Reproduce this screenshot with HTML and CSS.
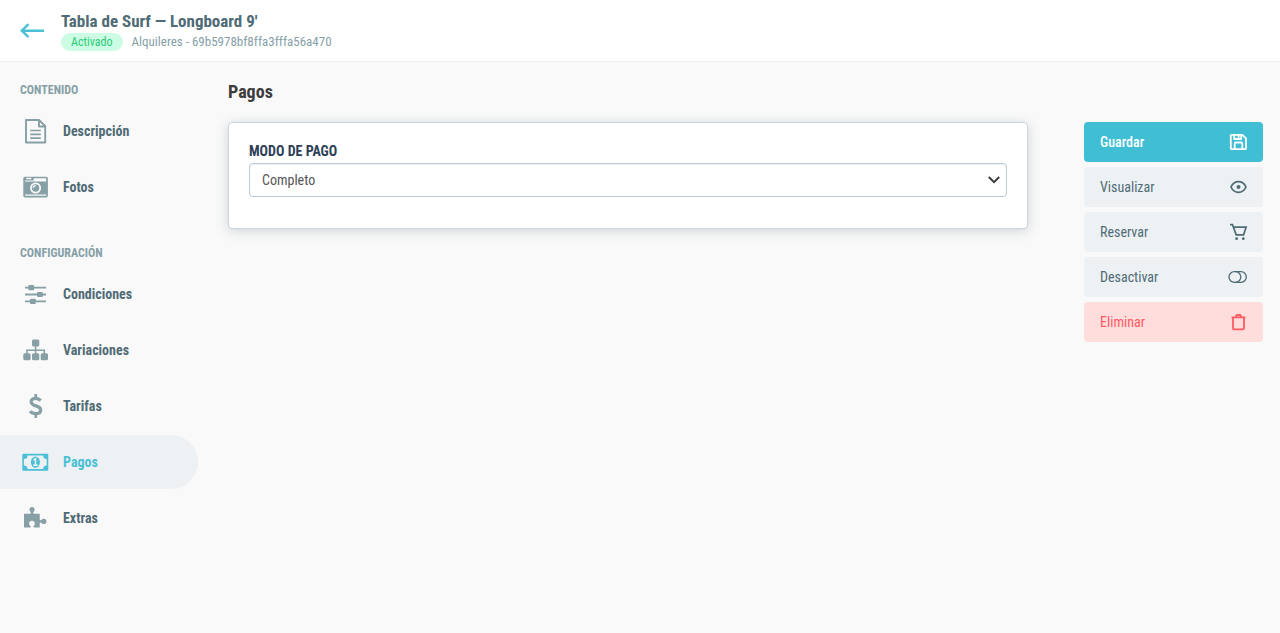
FILE: index.html
```html
<!DOCTYPE html>
<html lang="es">
<head>
  <meta charset="UTF-8">
  <meta name="viewport" content="width=device-width, initial-scale=1.0">
  <title>Tabla de Surf — Longboard 9' - Pagos</title>
  <link rel="stylesheet" href="styles.css">
</head>
<body>
  <!-- Header -->
  <header class="header">
    <a class="back" href="#" aria-label="Volver">
      <svg width="24" height="16" viewBox="0 0 24 16" fill="none" stroke="currentColor" stroke-width="2.4">
        <path d="M24 7.700H2M8.500 1.200L1.800 7.700l6.700 6.500"/>
      </svg>
    </a>
    <div class="header-info">
      <h1>Tabla de Surf — Longboard 9'</h1>
      <div class="header-meta">
        <span class="status">Activado</span>
        <span>Alquileres - 69b5978bf8ffa3fffa56a470</span>
      </div>
    </div>
  </header>

  <div class="layout">
    <!-- Sidebar -->
    <nav class="sidebar">
      <h2>Contenido</h2>
      <ul>
        <li><a href="#">
          <svg width="27" height="27" viewBox="0 0 27 27" fill="none" stroke="currentColor" stroke-width="1.900" stroke-linejoin="round">
            <path d="M4 2h13l6.200 6.200V24.500H4zM17 2.200v6.300h6"/>
            <path d="M8.200 12.500h10.600M8.200 16.300h10.600M8.200 20.100h10.600" stroke-width="1.700"/>
          </svg>
          Descripción
        </a></li>
        <li><a href="#">
          <svg width="27" height="27" viewBox="0 0 27 27">
            <rect x="1.300" y="2.700" width="24.600" height="20.800" rx="1.700" fill="currentColor"/>
            <path fill="#f9f9f9" d="M4.300 3.800h5v1.400h-5zM12 4.200h12.200v3.300H11zM3 6.500h8v1H3zM3 20.500h21.300v1.300H3z"/>
            <circle cx="13.600" cy="14" r="4.600" fill="currentColor" stroke="#f9f9f9" stroke-width="1.800"/>
            <path d="M11.300 14a2.300 2.300 0 0 1 2.300-2.300" fill="none" stroke="#f9f9f9" stroke-width="1.200"/>
          </svg>
          Fotos
        </a></li>
      </ul>

      <h2>Configuración</h2>
      <ul>
        <li><a href="#">
          <svg width="27" height="27" viewBox="0 0 27 27" fill="currentColor">
            <path d="M3 5.700h21v1.800H3zM3 12.600h21v1.800H3zM3 19.500h21v1.800H3z"/>
            <rect x="6.300" y="4" width="5.800" height="5.200" rx="1"/>
            <rect x="15" y="10.900" width="5.800" height="5.200" rx="1"/>
            <rect x="8" y="17.800" width="5.800" height="5.200" rx="1"/>
          </svg>
          Condiciones
        </a></li>
        <li><a href="#">
          <svg width="27" height="27" viewBox="0 0 27 27" fill="currentColor">
            <rect x="10" y="2.500" width="7.300" height="7" rx="1.500"/>
            <rect x="1.300" y="16.200" width="7.300" height="7" rx="1.500"/>
            <rect x="10" y="16.200" width="7.300" height="7" rx="1.500"/>
            <rect x="18.700" y="16.200" width="7.300" height="7" rx="1.500"/>
            <path d="M13.600 9v8M5 17v-3.700h17.300V17" fill="none" stroke="currentColor" stroke-width="1.600"/>
          </svg>
          Variaciones
        </a></li>
        <li><a href="#">
          <svg width="27" height="27" viewBox="0 0 27 27" fill="none" stroke="currentColor" stroke-width="3.300">
            <path d="M18.700 7.500C17.400 6 15.700 5.300 13.600 5.300c-2.800 0-4.500 1.400-4.500 3.500 0 5.300 9.600 3 9.600 8.200 0 2.400-2.100 3.700-4.900 3.700-2.300 0-4.300-.7-5.700-2.400"/>
            <path d="M13.800 1v4.300M13.800 21v4" stroke-width="2.600"/>
          </svg>
          Tarifas
        </a></li>
        <li><a class="active" href="#" aria-current="page">
          <svg width="27" height="27" viewBox="0 0 27 27">
            <path fill="currentColor" fill-rule="evenodd" d="M1.300 4.700h24a1 1 0 0 1 1 1v15a1 1 0 0 1-1 1h-24a1 1 0 0 1-1-1v-15a1 1 0 0 1 1-1zM5.500 6.500a3.600 3.600 0 0 1-3.600 3.600v6.300a3.600 3.600 0 0 1 3.600 3.600h15.700a3.600 3.600 0 0 1 3.500-3.600v-6.300a3.600 3.600 0 0 1-3.500-3.600z"/>
            <ellipse cx="13.400" cy="13.200" rx="4.500" ry="5.600" fill="currentColor"/>
            <path d="M11.500 11.200l2-1.500v6M11.200 16.300h4.600" fill="none" stroke="#edf1f4" stroke-width="1.500"/>
          </svg>
          Pagos
        </a></li>
        <li><a href="#">
          <svg width="27" height="27" viewBox="0 0 27 27" fill="currentColor">
            <path d="M2 8.700h6c1 0 1.300-.8.800-1.500-.7-1-1.300-1.600-1.300-2.700C7.500 2.800 8.600 2 10 2s2.600.8 2.600 2.500c0 1.100-.6 1.700-1.300 2.700-.5.700-.2 1.500.9 1.500h5.500v5.500c0 1.100.8 1.400 1.500.9 1-.7 1.600-1.300 2.700-1.300 1.700 0 2.500 1.200 2.500 2.600s-.8 2.600-2.500 2.600c-1.100 0-1.700-.6-2.700-1.300-.7-.5-1.500-.2-1.500.9v4h-5.200c-1 0-1.400-.7-.9-1.500.7-1 1.300-1.600 1.300-2.700 0-1.700-1.300-2.600-2.900-2.600s-2.900.9-2.900 2.600c0 1.100.6 1.700 1.300 2.700.5.800.1 1.500-.9 1.500H2z"/>
          </svg>
          Extras
        </a></li>
      </ul>
    </nav>

    <!-- Payment form -->
    <main class="content">
      <h2>Pagos</h2>
      <div class="columns">
        <form class="card">
          <label for="payment-mode">Modo de pago</label>
          <div class="select-box">
            <select id="payment-mode">
              <option selected>Completo</option>
            </select>
            <svg width="12" height="8" viewBox="0 0 12 8" fill="none" stroke="currentColor" stroke-width="2">
              <path d="M.8 1l5.200 5.200L11.200 1"/>
            </svg>
          </div>
        </form>

        <!-- Actions -->
        <div class="actions">
          <button type="button" class="primary">Guardar
            <svg width="20" height="20" viewBox="0 0 20 20" fill="none" stroke="currentColor" stroke-width="1.800" stroke-linejoin="round">
              <path d="M3.800 2.800h10.500l3.700 3.500v9.900a1 1 0 0 1-1 1H3.800a1 1 0 0 1-1-1V3.800a1 1 0 0 1 1-1zM6.200 3v4h7V3M6.700 17v-5.500a1 1 0 0 1 1-1h5.600a1 1 0 0 1 1 1V17M10.600 3v2.700"/>
            </svg>
          </button>
          <button type="button">Visualizar
            <svg width="20" height="20" viewBox="0 0 20 20" fill="none" stroke="currentColor" stroke-width="1.700">
              <path d="M3 10c1.500-3.400 4.300-5.300 7.500-5.300S16.500 6.600 18 10c-1.500 3.400-4.300 5.300-7.500 5.300S4.500 13.400 3 10z"/>
              <circle cx="10.500" cy="10" r="2" fill="currentColor" stroke="none"/>
            </svg>
          </button>
          <button type="button">Reservar
            <svg width="20" height="20" viewBox="0 0 20 20" fill="none" stroke="currentColor" stroke-width="1.700">
              <path d="M2 2.700h2.500l3.700 10.100h7.400l2.500-7.600H5.500"/>
              <circle cx="8.600" cy="16.700" r="1.400" fill="currentColor" stroke="none"/>
              <circle cx="15.300" cy="16.700" r="1.400" fill="currentColor" stroke="none"/>
            </svg>
          </button>
          <button type="button">Desactivar
            <svg width="20" height="20" viewBox="0 0 20 20" fill="none" stroke="currentColor" stroke-width="1.300">
              <rect x="1" y="4.700" width="17.300" height="10.600" rx="5.300"/>
              <path d="M7.500 4.700a5.300 5.300 0 0 1 0 10.600"/>
            </svg>
          </button>
          <button type="button" class="danger">Eliminar
            <svg width="20" height="20" viewBox="0 0 20 20" fill="none" stroke="currentColor" stroke-width="1.800" stroke-linejoin="round">
              <path d="M3.500 5.300h14M5 5.500v10.600a1.300 1.300 0 0 0 1.300 1.300h8.400a1.300 1.300 0 0 0 1.300-1.300V5.500M8.200 5V4a1 1 0 0 1 1-1h2.600a1 1 0 0 1 1 1v1"/>
            </svg>
          </button>
        </div>
      </div>
    </main>
  </div>
</body>
</html>
```
FILE: styles.css
```css
/* General */
* {
  box-sizing: border-box;
}

body {
  margin: 0;
  min-height: 100vh;
  background-color: #f9f9f9;
  color: #3c3c3c;
  font-family: "Roboto Condensed", Roboto, sans-serif;
  font-size: 14px;
  line-height: 20px;
}

h1, h2 {
  margin: 0;
}

svg {
  display: block;
  flex: none;
}

/* Header */
.header {
  display: flex;
  align-items: center;
  gap: 17px;
  padding: 10px 20px;
  background-color: #fff;
  border-bottom: 1px solid #eee;
}

.back {
  color: #4bbfd6;
}

.header-info h1 {
  font-size: 17px;
  line-height: 22px;
  color: #4f6b75;
}

.header-meta {
  display: flex;
  align-items: center;
  gap: 9px;
  margin-top: 1px;
  font-size: 13px;
  line-height: 18px;
  color: #86a0a8;
}

.status {
  padding: 0 10px;
  border-radius: 9px;
  background-color: #ccfde4;
  color: #2bcb78;
  font-size: 12px;
}

/* Sidebar */
.layout {
  display: flex;
}

.sidebar {
  flex: none;
  width: 198px;
  padding-top: 18px;
}

.sidebar h2 {
  padding-left: 20px;
  font-size: 12px;
  line-height: 20px;
  text-transform: uppercase;
  color: #86a0a6;
}

.sidebar ul {
  display: flex;
  flex-direction: column;
  gap: 2px;
  margin: 4px 0 29px;
  padding: 0;
  list-style: none;
}

.sidebar a {
  display: flex;
  align-items: center;
  gap: 14px;
  height: 54px;
  padding-left: 22px;
  border-radius: 0 27px 27px 0;
  color: #4f6b75;
  font-weight: bold;
  text-decoration: none;
}

.sidebar svg {
  color: #86a0a6;
}

.sidebar .active {
  background-color: #edf1f4;
}

.sidebar .active,
.sidebar .active svg {
  color: #4bbfd6;
}

/* Content */
.content {
  flex: 1;
  padding: 18px 17px 20px 30px;
}

.content h2 {
  margin-bottom: 18px;
  font-size: 18px;
  line-height: 24px;
}

.columns {
  display: flex;
  justify-content: space-between;
  align-items: flex-start;
  gap: 56px;
}

.card {
  flex: 1;
  padding: 18px 20px 31px;
  border: 1px solid #c9d5e0;
  border-radius: 4px;
  background-color: #fff;
  box-shadow: 0 2px 12px rgba(79, 107, 117, 0.25);
}

.card label {
  display: block;
  margin-bottom: 2px;
  color: #2e4057;
  font-weight: bold;
  text-transform: uppercase;
}

.select-box {
  display: grid;
  align-items: center;
}

.select-box select,
.select-box svg {
  grid-area: 1 / 1;
}

.select-box svg {
  justify-self: end;
  margin-right: 7px;
  pointer-events: none;
}

.select-box select {
  appearance: none;
  width: 100%;
  height: 34px;
  padding: 0 12px;
  border: 1px solid #bccad6;
  border-radius: 4px;
  background-color: #fff;
  box-shadow: inset 0 1px 1px rgba(0, 0, 0, 0.07);
  color: #555;
  font: inherit;
}

/* Actions */
.actions {
  display: flex;
  flex: none;
  flex-direction: column;
  gap: 5px;
  width: 179px;
}

.actions button {
  display: flex;
  align-items: center;
  justify-content: space-between;
  height: 40px;
  padding: 0 15px 0 16px;
  border: none;
  border-radius: 4px;
  background-color: #edf1f4;
  color: #4f6b75;
  font: inherit;
  cursor: pointer;
}

.actions .primary {
  background-color: #40bfd4;
  color: #fff;
  font-weight: 500;
}

.actions .danger {
  background-color: #ffdddd;
  color: #ff5a5f;
}
```
